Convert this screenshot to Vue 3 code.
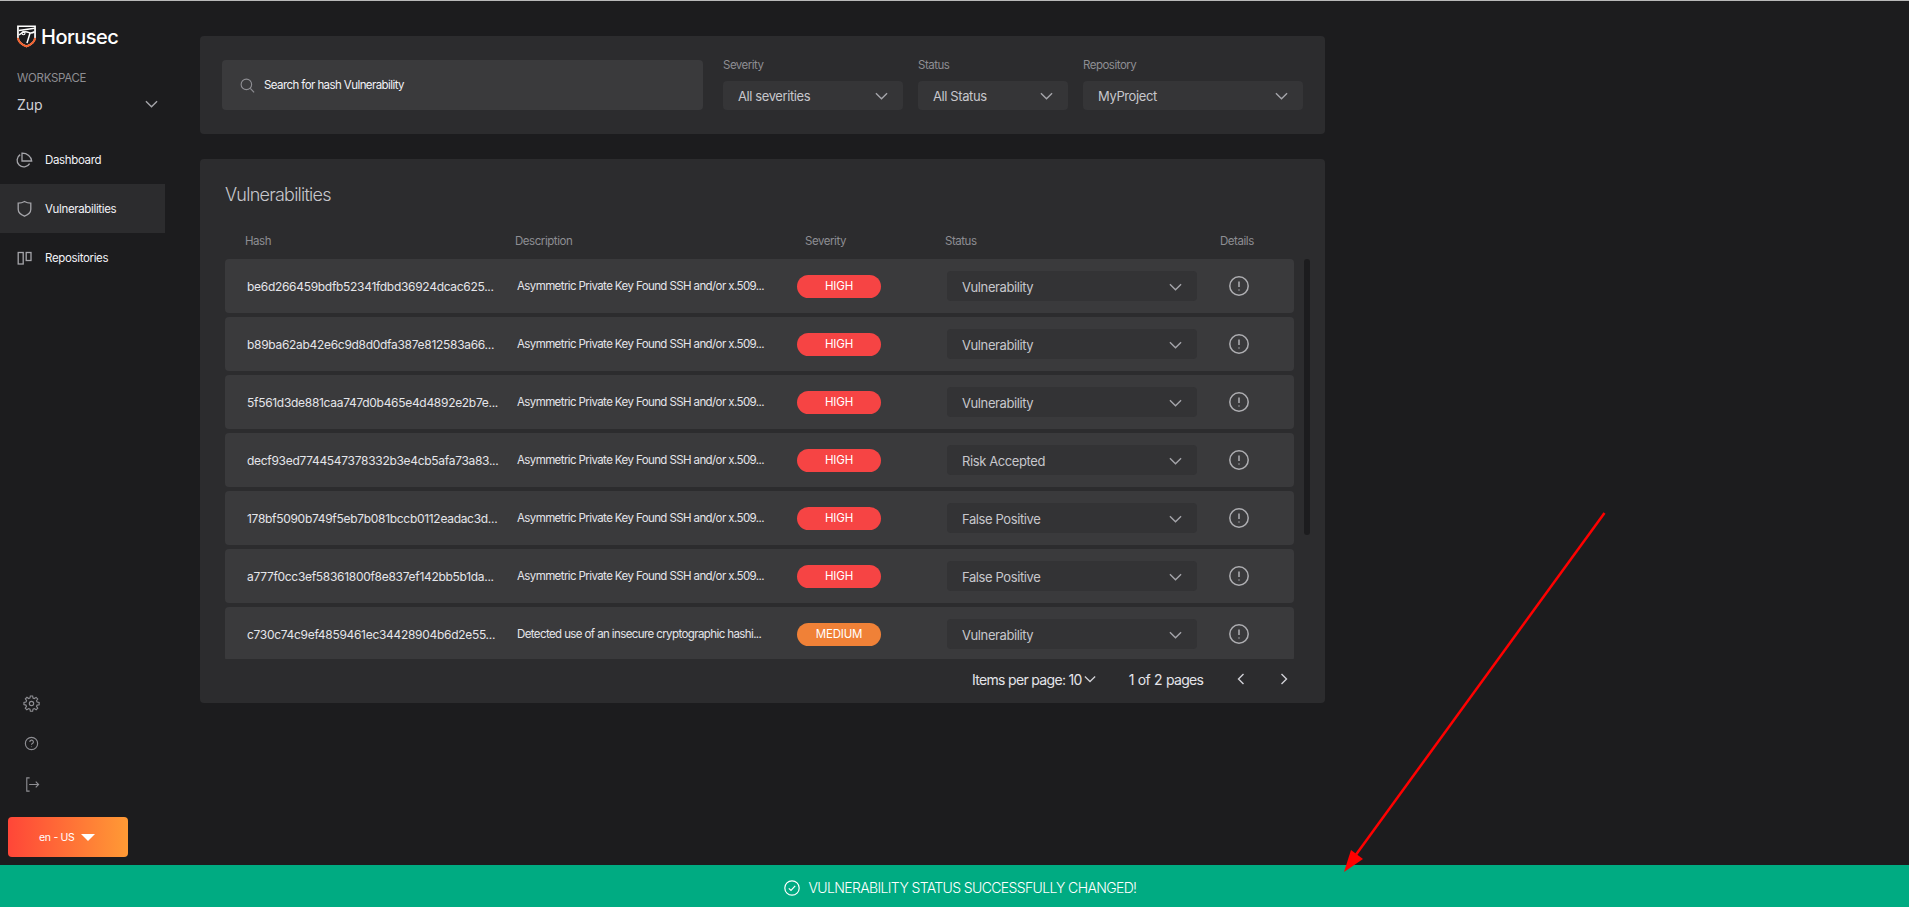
<script setup>
const nav = [
  { label: 'Dashboard', icon: 'pie' },
  { label: 'Vulnerabilities', icon: 'shield', active: true },
  { label: 'Repositories', icon: 'repo' }
]
const filters = [
  { label: 'Severity', value: 'All severities', cls: 'w-sev' },
  { label: 'Status', value: 'All Status', cls: 'w-sta' },
  { label: 'Repository', value: 'MyProject', cls: 'w-rep' }
]
const asym = 'Asymmetric Private Key Found SSH and/or x.509...'
const rows = [
  { hash: 'be6d266459bdfb52341fdbd36924dcac625...', desc: asym, sev: 'HIGH', status: 'Vulnerability' },
  { hash: 'b89ba62ab42e6c9d8d0dfa387e812583a66...', desc: asym, sev: 'HIGH', status: 'Vulnerability' },
  { hash: '5f561d3de881caa747d0b465e4d4892e2b7e...', desc: asym, sev: 'HIGH', status: 'Vulnerability' },
  { hash: 'decf93ed7744547378332b3e4cb5afa73a83...', desc: asym, sev: 'HIGH', status: 'Risk Accepted' },
  { hash: '178bf5090b749f5eb7b081bccb0112eadac3d...', desc: asym, sev: 'HIGH', status: 'False Positive' },
  { hash: 'a777f0cc3ef58361800f8e837ef142bb5b1da...', desc: asym, sev: 'HIGH', status: 'False Positive' },
  { hash: 'c730c74c9ef4859461ec34428904b6d2e55...', desc: 'Detected use of an insecure cryptographic hashi...', sev: 'MEDIUM', status: 'Vulnerability' }
]
</script>

<template>
  <div class="page">
    <div class="topline"></div>
    <div class="shell">
      <aside class="side">
        <div class="brand">
          <svg class="logo" viewBox="0 0 20 24" fill="none">
            <path d="M1 1.200h18v11.500c0 4.800-4 7.800-9 9.700-5-1.900-9-4.900-9-9.700z" stroke="#fff" stroke-width="1.800" />
            <path d="M1 13.500c.4 4.300 4 7.200 9 8.900 5-1.700 8.600-4.600 9-8.900" stroke="#f4602c" stroke-width="2" />
            <path d="M2 5.800 18.500 3.400M2 10.500c3.500-3.500 7-4.300 10-2.800 2 1 4 1 6.500-.7M14 7.500l-3.500 11.500" stroke="#fff" stroke-width="1.600" />
            <circle cx="6.800" cy="8.500" r="1.600" stroke="#fff" stroke-width="1.200" />
          </svg>
          <span class="brand-name">Horusec</span>
        </div>
        <div class="ws-label">WORKSPACE</div>
        <div class="ws-row">
          <span>Zup</span>
          <svg class="chev" viewBox="0 0 14 8" fill="none"><path d="M1 1l6 6 6-6" /></svg>
        </div>
        <nav class="nav">
          <div v-for="n in nav" :key="n.label" class="nav-item" :class="{ active: n.active }">
            <svg v-if="n.icon === 'pie'" class="nav-ico" viewBox="0 0 18 18" fill="none">
              <path d="M5.200 3.600A6.700 6.700 0 1 0 14.600 12.600" />
              <path d="M7 2.200a9.500 8.200 0 0 1 9.700 7.800H7z" />
            </svg>
            <svg v-else-if="n.icon === 'shield'" class="nav-ico" viewBox="0 0 18 18" fill="none">
              <path d="M9.500 1.500c2 1.100 4 1.600 6.300 1.700v6c0 3.300-2.800 5.600-6.300 7-3.500-1.400-6.300-3.700-6.300-7v-6c2.300-.1 4.300-.6 6.300-1.700z" />
            </svg>
            <svg v-else class="nav-ico" viewBox="0 0 18 18" fill="none">
              <rect x="3.200" y="3.500" width="5" height="11.500" />
              <rect x="11.200" y="3.500" width="4.800" height="8" />
            </svg>
            <span>{{ n.label }}</span>
          </div>
        </nav>
        <div class="side-tools">
          <svg class="tool" viewBox="0 0 18 18" fill="none">
            <circle cx="9" cy="9" r="2.300" />
            <path d="M7.800 1h2.400l.4 2.200 1.400.6 1.900-1.300 1.700 1.700-1.300 1.900.6 1.400 2.200.4v2.400l-2.200.4-.6 1.400 1.300 1.900-1.700 1.700-1.900-1.300-1.400.6-.4 2.200H7.800l-.4-2.200-1.400-.6-1.900 1.300-1.700-1.700 1.300-1.900-.6-1.400L1 10.200V7.800l2.200-.4.6-1.400-1.300-1.900 1.700-1.700L6 3.700l1.400-.6z" />
          </svg>
          <svg class="tool" viewBox="0 0 18 18" fill="none">
            <circle cx="9" cy="9" r="6.500" />
            <path d="M7.200 7.300a1.900 1.900 0 1 1 2.700 1.700c-.6.300-.9.700-.9 1.400" />
            <path d="M9 12.200v.6" />
          </svg>
          <svg class="tool" viewBox="0 0 18 18" fill="none">
            <path d="M7 2H4v14h3" />
            <path d="M6.500 9h10M13.500 6l3 3-3 3" />
          </svg>
        </div>
        <div class="lang">
          <span>en - US</span>
          <i class="tri"></i>
        </div>
      </aside>

      <main class="main">
        <section class="card filters">
          <div class="search">
            <svg class="s-ico" viewBox="0 0 16 16" fill="none">
              <circle cx="6.800" cy="6.800" r="5.600" />
              <path d="M11 11l4 4.300" />
            </svg>
            <span>Search for hash Vulnerability</span>
          </div>
          <div v-for="f in filters" :key="f.label" class="field" :class="f.cls">
            <label>{{ f.label }}</label>
            <div class="select">
              <span>{{ f.value }}</span>
              <svg class="chev" viewBox="0 0 14 8" fill="none"><path d="M1 1l6 6 6-6" /></svg>
            </div>
          </div>
        </section>

        <section class="card vulns">
          <h2>Vulnerabilities</h2>
          <div class="thead">
            <span>Hash</span><span>Description</span><span>Severity</span><span>Status</span><span>Details</span>
          </div>
          <div class="list">
            <div v-for="r in rows" :key="r.hash" class="row">
              <span class="cell-text">{{ r.hash }}</span>
              <span class="cell-text desc">{{ r.desc }}</span>
              <span class="badge" :class="r.sev === 'HIGH' ? 'high' : 'medium'">{{ r.sev }}</span>
              <div class="select in-row">
                <span>{{ r.status }}</span>
                <svg class="chev" viewBox="0 0 14 8" fill="none"><path d="M1 1l6 6 6-6" /></svg>
              </div>
              <svg class="info" viewBox="0 0 20 20" fill="none">
                <circle cx="10" cy="10" r="9.200" />
                <path d="M10 5.500v5.500M10 13.600v1" />
              </svg>
            </div>
            <div class="thumb"></div>
          </div>
          <div class="pager">
            <span class="items">Items per page: 10</span>
            <svg class="chev pg-chev" viewBox="0 0 14 8" fill="none"><path d="M1 1l6 6 6-6" /></svg>
            <span class="pages">1 of 2 pages</span>
            <svg class="nav-arrow first" viewBox="0 0 8 12" fill="none"><path d="M6.500 1L1.500 6l5 5" /></svg>
            <svg class="nav-arrow" viewBox="0 0 8 12" fill="none"><path d="M1.500 1l5 5-5 5" /></svg>
          </div>
        </section>
      </main>
    </div>

    <div class="toast">
      <svg class="t-ico" viewBox="0 0 16 16" fill="none">
        <circle cx="8" cy="8" r="7.200" />
        <path d="M4.800 8.300l2.200 2.200 4.200-4.700" />
      </svg>
      <span>VULNERABILITY STATUS SUCCESSFULLY CHANGED!</span>
    </div>

    <svg class="annot" viewBox="0 0 1909 907" fill="none">
      <path d="M1604.500 513L1355 856" stroke="#f00" stroke-width="2.500" />
      <path d="M1344 872l7-22 12 9z" fill="#f00" />
    </svg>
  </div>
</template>

<style>
html, body { margin: 0; background: #1c1c1e; }
</style>

<style scoped>
.page {
  position: relative;
  width: 1909px;
  height: 907px;
  overflow: hidden;
  background: #1c1c1e;
  font-family: Inter, "Noto Sans", sans-serif;
  color: #f2f2f7;
  display: flex;
  flex-direction: column;
}
.topline { height: 1px; background: #b9b9b9; flex: none; }
.shell { display: flex; flex: 1; min-height: 0; }

/* sidebar */
.side {
  width: 165px;
  flex: none;
  height: 864px;
  box-sizing: border-box;
  padding-top: 24px;
  display: flex;
  flex-direction: column;
}
.brand { display: flex; align-items: center; padding-left: 17px; height: 23px; gap: 5px; }
.logo { width: 19px; height: 23px; flex: none; }
.brand-name { font-size: 20px; font-weight: 500; letter-spacing: -0.5px; color: #fff; }
.ws-label { margin: 23px 0 0 17px; font-size: 11.500px; line-height: 15px; color: #8e8e93; letter-spacing: -0.3px; }
.ws-row {
  display: flex;
  justify-content: space-between;
  align-items: center;
  padding: 0 7px 0 17px;
  margin-top: 8px;
  height: 20px;
  font-size: 14px;
  color: #d1d1d6;
}
.chev { width: 13px; height: 8px; flex: none; stroke: #a5a5aa; stroke-width: 1.500; }
.nav { margin-top: 21px; display: flex; flex-direction: column; }
.nav-item {
  height: 49px;
  display: flex;
  align-items: center;
  gap: 12px;
  padding-left: 15px;
  font-size: 11.500px;
  letter-spacing: -0.35px;
  color: #f2f2f7;
}
.nav-item.active { background: #2c2c2e; }
.nav-ico { width: 18px; height: 18px; stroke: #a5a5aa; stroke-width: 1.300; flex: none; }
.side-tools {
  margin-top: auto;
  display: flex;
  flex-direction: column;
  gap: 23px;
  padding-left: 23px;
}
.tool { width: 17px; height: 17px; stroke: #8e8e93; stroke-width: 1.200; }
.tool:last-child { margin-top: 1px; }
.lang {
  margin: 24px 0 8px 8px;
  width: 120px;
  height: 40px;
  border-radius: 4px;
  background: linear-gradient(90deg, #ff4638, #ff9a35);
  display: flex;
  align-items: center;
  gap: 6px;
  padding-left: 31px;
  box-sizing: border-box;
  font-size: 10.500px;
  letter-spacing: -0.3px;
  color: #fff;
}
.tri {
  width: 0;
  height: 0;
  border-left: 7px solid transparent;
  border-right: 7px solid transparent;
  border-top: 7px solid #fff;
}

/* main */
.main { margin-left: 35px; width: 1125px; padding-top: 35px; display: flex; flex-direction: column; gap: 25px; }
.card { background: #2c2c2e; border-radius: 4px; }
.filters {
  height: 98px;
  box-sizing: border-box;
  padding: 24px 22px;
  display: flex;
  gap: 15px;
}
.search {
  width: 481px;
  height: 50px;
  margin-right: 5px;
  background: #3a3a3c;
  border-radius: 4px;
  display: flex;
  align-items: center;
  padding-left: 18px;
  box-sizing: border-box;
  gap: 9px;
  font-size: 11.500px;
  letter-spacing: -0.58px;
  color: #f2f2f7;
}
.s-ico { width: 15px; height: 15px; stroke: #8e8e93; stroke-width: 1.200; flex: none; }
.field { display: flex; flex-direction: column; }
.field label { font-size: 11.500px; line-height: 15px; height: 24px; color: #8e8e93; letter-spacing: -0.5px; margin-top: -2px; }
.w-sev { width: 180px; }
.w-sta { width: 150px; }
.w-rep { width: 220px; }
.select {
  height: 30px;
  background: #353537;
  border-radius: 4px;
  display: flex;
  align-items: center;
  justify-content: space-between;
  padding: 1px 15px 0;
  box-sizing: border-box;
  font-size: 13px;
  letter-spacing: -0.4px;
  color: #c7c7cc;
}
.vulns { height: 544px; box-sizing: border-box; padding: 0 0 0 25px; }
.vulns h2 {
  margin: 0;
  padding-top: 25px;
  font-size: 18px;
  line-height: 22px;
  font-weight: 300;
  letter-spacing: -0.750px;
  color: #c7c7cc;
}
.thead {
  margin-top: 28px;
  height: 25px;
  display: grid;
  grid-template-columns: 270px 290px 140px 275px auto;
  padding-left: 20px;
  font-size: 11.500px;
  line-height: 15px;
  letter-spacing: -0.45px;
  color: #8e8e93;
}
.list {
  position: relative;
  width: 1085px;
  height: 400px;
  overflow: hidden;
  display: flex;
  flex-direction: column;
  gap: 4px;
}
.row {
  flex: none;
  width: 1069px;
  height: 54px;
  background: #3a3a3c;
  border-radius: 4px;
  display: grid;
  grid-template-columns: 270px 280px 150px 250px auto;
  align-items: center;
  padding-left: 22px;
  box-sizing: border-box;
}
.cell-text { font-size: 12px; letter-spacing: -0.3px; white-space: nowrap; color: #e5e5ea; }
.cell-text.desc { font-size: 11.500px; letter-spacing: -0.6px; }
.badge {
  width: 84px;
  height: 23px;
  border-radius: 12px;
  display: flex;
  align-items: center;
  justify-content: center;
  font-size: 11.500px;
  letter-spacing: -0.2px;
  color: #fff;
}
.badge.high { background: #f64444; }
.badge.medium { background: #f08137; }
.select.in-row { background: #333335; }
.info { width: 20px; height: 20px; margin-left: 32px; stroke: #aeaeb2; stroke-width: 1.500; }
.thumb {
  position: absolute;
  left: 1079px;
  top: 0;
  width: 6px;
  height: 276px;
  border-radius: 3px;
  background: #1c1c1e;
}
.pager {
  display: flex;
  align-items: center;
  height: 40px;
  padding-left: 747px;
  font-size: 14px;
  letter-spacing: -0.68px;
  color: #e5e5ea;
}
.pg-chev { margin-left: 2px; width: 12px; stroke: #d1d1d6; }
.pages { margin-left: 33px; letter-spacing: -0.75px; word-spacing: 1px; }
.nav-arrow { width: 8px; height: 12px; margin-left: 35px; stroke: #d1d1d6; stroke-width: 1.400; }
.nav-arrow.first { margin-left: 34px; }

/* overlays */
.toast {
  position: absolute;
  left: 0;
  right: 0;
  bottom: 0;
  height: 42px;
  background: #00ab82;
  display: flex;
  align-items: center;
  justify-content: center;
  padding: 3px 0 0 11px;
  box-sizing: border-box;
  gap: 9px;
  font-size: 14px;
  font-weight: 300;
  letter-spacing: -0.63px;
  color: #fff;
}
.t-ico { width: 16px; height: 16px; stroke: #fff; stroke-width: 1.200; }
.annot { position: absolute; inset: 0; width: 1909px; height: 907px; pointer-events: none; }
</style>
